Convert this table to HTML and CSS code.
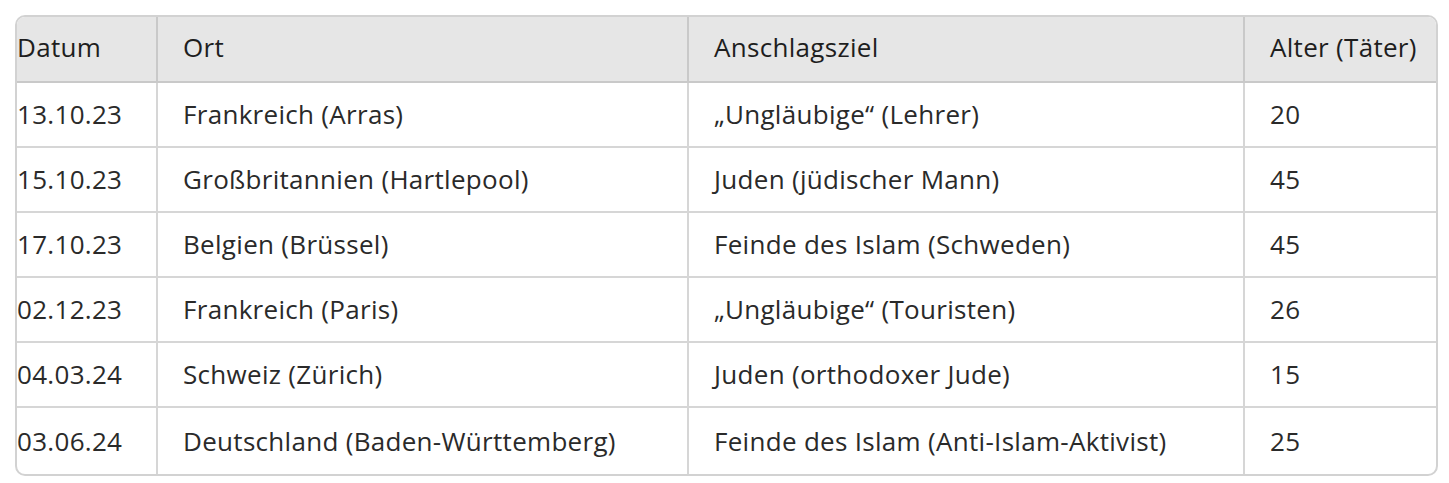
FILE: index.html
```html
<!DOCTYPE html>
<html lang="de">
<head>
<meta charset="utf-8">
<title>Anschläge</title>
<link rel="stylesheet" href="styles.css">
</head>
<body>
<div class="wrap">
<table class="data">
<colgroup><col class="w1"><col class="w2"><col class="w3"><col></colgroup>
<thead>
<tr><th class="c1">Datum</th><th>Ort</th><th>Anschlagsziel</th><th>Alter (Täter)</th></tr>
</thead>
<tbody>
<tr><td class="c1">13.10.23</td><td>Frankreich (Arras)</td><td>„Ungläubige“ (Lehrer)</td><td>20</td></tr>
<tr><td class="c1">15.10.23</td><td>Großbritannien (Hartlepool)</td><td>Juden (jüdischer Mann)</td><td>45</td></tr>
<tr><td class="c1">17.10.23</td><td>Belgien (Brüssel)</td><td>Feinde des Islam (Schweden)</td><td>45</td></tr>
<tr><td class="c1">02.12.23</td><td>Frankreich (Paris)</td><td>„Ungläubige“ (Touristen)</td><td>26</td></tr>
<tr><td class="c1">04.03.24</td><td>Schweiz (Zürich)</td><td>Juden (orthodoxer Jude)</td><td>15</td></tr>
<tr><td class="c1">03.06.24</td><td>Deutschland (Baden-Württemberg)</td><td>Feinde des Islam (Anti-Islam-Aktivist)</td><td>25</td></tr>
</tbody>
</table>
</div>
</body>
</html>
```
FILE: styles.css
```css
html, body { margin: 0; padding: 0; background: #fff; }
body { padding: 15px; font-family: "Open Sans", "Noto Sans", sans-serif; }
.wrap {
  width: 1423px;
  box-sizing: border-box;
  border: 2px solid #d2d2d2;
  border-radius: 10px;
  overflow: hidden;
}
.data {
  width: 100%;
  border-collapse: collapse;
  table-layout: fixed;
  font-size: 26px;
  letter-spacing: 0.3px;
  color: #2a2a2a;
}
.w1 { width: 140px; }
.w2 { width: 531px; }
.w3 { width: 556px; }
.data th, .data td {
  box-sizing: border-box;
  text-align: left;
  padding: 0 0 1px 25px;
  border-right: 2px solid #d6d6d6;
  border-bottom: 2px solid #d6d6d6;
  white-space: nowrap;
  overflow: hidden;
}
.data th:last-child, .data td:last-child { border-right: 0; }
.data tbody tr:last-child td { border-bottom: 0; height: 67px; }
.data th {
  background: #e6e6e6;
  height: 65px;
  padding-bottom: 4px;
  font-weight: 500;
  color: #1e1e1e;
  border-bottom-color: #c9c9c9;
  border-right-color: #c9c9c9;
}
.data td { height: 65px; }
.data .c1 { padding-left: 0; }
```
